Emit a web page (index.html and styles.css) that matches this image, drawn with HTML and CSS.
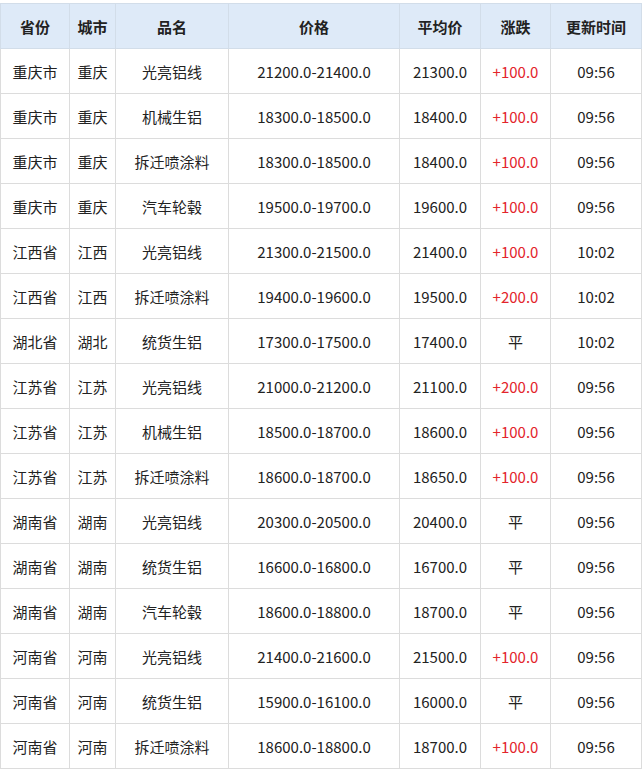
FILE: index.html
```html
<!DOCTYPE html>
<html lang="zh-CN">
<head>
<meta charset="utf-8">
<link rel="stylesheet" href="styles.css">
</head>
<body>
<div class="wrap">
<table class="price-table">
<colgroup>
<col class="c1"><col class="c2"><col class="c3"><col class="c4"><col class="c5"><col class="c6"><col class="c7">
</colgroup>
<thead>
<tr><th>省份</th><th>城市</th><th>品名</th><th>价格</th><th>平均价</th><th>涨跌</th><th>更新时间</th></tr>
</thead>
<tbody>
<tr><td>重庆市</td><td>重庆</td><td>光亮铝线</td><td>21200.0-21400.0</td><td>21300.0</td><td class="up">+100.0</td><td>09:56</td></tr>
<tr><td>重庆市</td><td>重庆</td><td>机械生铝</td><td>18300.0-18500.0</td><td>18400.0</td><td class="up">+100.0</td><td>09:56</td></tr>
<tr><td>重庆市</td><td>重庆</td><td>拆迁喷涂料</td><td>18300.0-18500.0</td><td>18400.0</td><td class="up">+100.0</td><td>09:56</td></tr>
<tr><td>重庆市</td><td>重庆</td><td>汽车轮毂</td><td>19500.0-19700.0</td><td>19600.0</td><td class="up">+100.0</td><td>09:56</td></tr>
<tr><td>江西省</td><td>江西</td><td>光亮铝线</td><td>21300.0-21500.0</td><td>21400.0</td><td class="up">+100.0</td><td>10:02</td></tr>
<tr><td>江西省</td><td>江西</td><td>拆迁喷涂料</td><td>19400.0-19600.0</td><td>19500.0</td><td class="up">+200.0</td><td>10:02</td></tr>
<tr><td>湖北省</td><td>湖北</td><td>统货生铝</td><td>17300.0-17500.0</td><td>17400.0</td><td>平</td><td>10:02</td></tr>
<tr><td>江苏省</td><td>江苏</td><td>光亮铝线</td><td>21000.0-21200.0</td><td>21100.0</td><td class="up">+200.0</td><td>09:56</td></tr>
<tr><td>江苏省</td><td>江苏</td><td>机械生铝</td><td>18500.0-18700.0</td><td>18600.0</td><td class="up">+100.0</td><td>09:56</td></tr>
<tr><td>江苏省</td><td>江苏</td><td>拆迁喷涂料</td><td>18600.0-18700.0</td><td>18650.0</td><td class="up">+100.0</td><td>09:56</td></tr>
<tr><td>湖南省</td><td>湖南</td><td>光亮铝线</td><td>20300.0-20500.0</td><td>20400.0</td><td>平</td><td>09:56</td></tr>
<tr><td>湖南省</td><td>湖南</td><td>统货生铝</td><td>16600.0-16800.0</td><td>16700.0</td><td>平</td><td>09:56</td></tr>
<tr><td>湖南省</td><td>湖南</td><td>汽车轮毂</td><td>18600.0-18800.0</td><td>18700.0</td><td>平</td><td>09:56</td></tr>
<tr><td>河南省</td><td>河南</td><td>光亮铝线</td><td>21400.0-21600.0</td><td>21500.0</td><td class="up">+100.0</td><td>09:56</td></tr>
<tr><td>河南省</td><td>河南</td><td>统货生铝</td><td>15900.0-16100.0</td><td>16000.0</td><td>平</td><td>09:56</td></tr>
<tr><td>河南省</td><td>河南</td><td>拆迁喷涂料</td><td>18600.0-18800.0</td><td>18700.0</td><td class="up">+100.0</td><td>09:56</td></tr>
</tbody>
</table>
</div>
</body>
</html>
```

FILE: styles.css
```css
html, body {
  margin: 0;
  padding: 0;
  background: #ffffff;
}
.wrap {
  padding-top: 3px;
}
.price-table {
  border-collapse: collapse;
  table-layout: fixed;
  width: 641px;
  font-family: "Noto Sans CJK SC", "Noto Sans", sans-serif;
  font-size: 15px;
  color: #222;
}
.c1 { width: 69px; }
.c2 { width: 46px; }
.c3 { width: 113px; }
.c4 { width: 171px; }
.c5 { width: 81px; }
.c6 { width: 70px; }
.c7 { width: 91px; }
.price-table th,
.price-table td {
  border: 1px solid #dcdcdc;
  height: 44px;
  padding: 0;
  text-align: center;
  vertical-align: middle;
  white-space: nowrap;
}
.price-table th {
  background: #deeaf8;
  font-weight: bold;
  color: #222;
  border-color: #d2dde9;
}
.price-table td.up {
  color: #e3242b;
}
```
